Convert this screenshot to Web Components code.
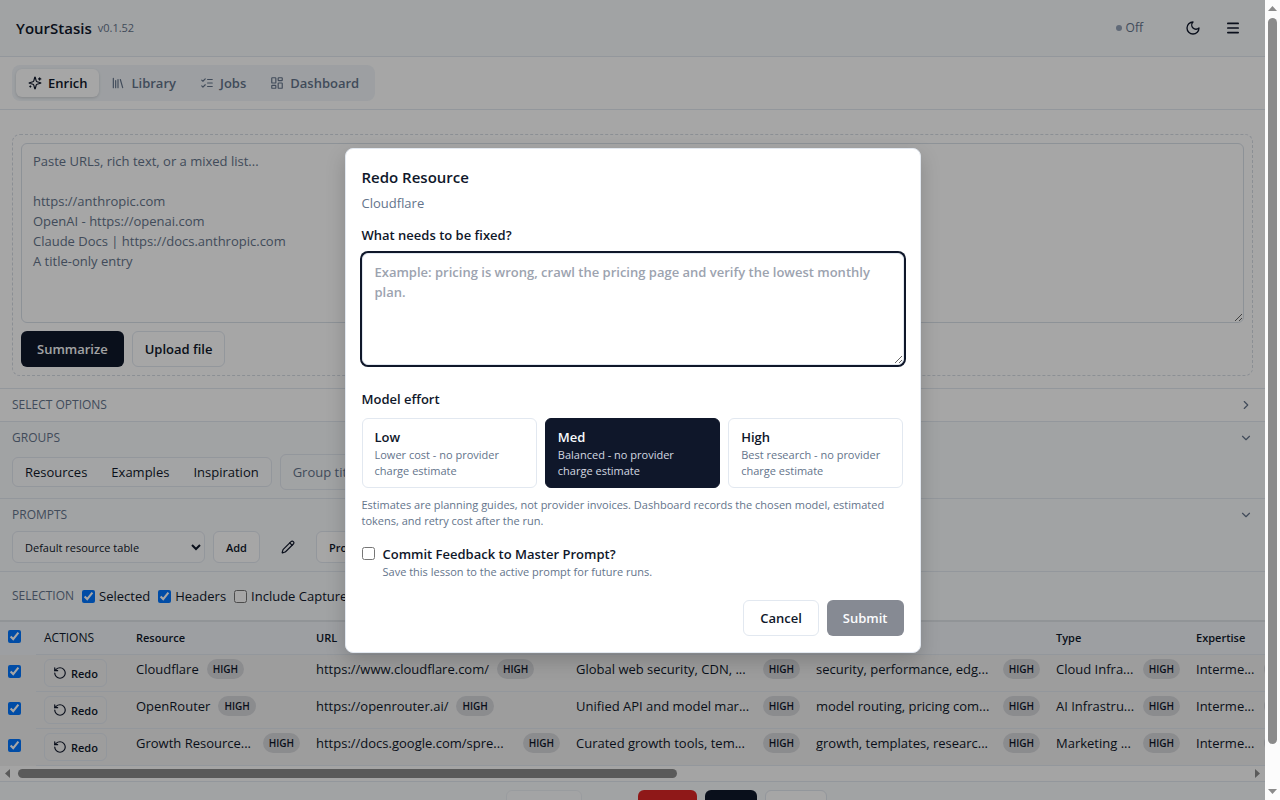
<!DOCTYPE html>
<html lang="en">
<head>
<meta charset="utf-8">
<title>YourStasis</title>
<style>
    :root {
        --ink: #0f172a;
        --muted: #64748b;
        --line: #e2e8f0;
        --surface: #f8fafc;
        --fill: #f1f5f9;
        --text-xs: 11px;
        --text-caps: 12px;
        --text-sm: 13px;
        --text-md: 15px;
    }
    body {
        margin: 0;
        background: #fff;
        color: var(--ink);
        font: 400 13px/20px "Open Sans", "Noto Sans", sans-serif;
    }
</style>
</head>
<body>
<app-shell>
    <top-bar version="v0.1.52">YourStasis</top-bar>
    <tab-bar>
        <tab-item icon="sparkles" active>Enrich</tab-item>
        <tab-item icon="library">Library</tab-item>
        <tab-item icon="checks">Jobs</tab-item>
        <tab-item icon="dashboard">Dashboard</tab-item>
    </tab-bar>
    <paste-box></paste-box>
    <option-section heading="Select options" plain></option-section>
    <option-section heading="Groups" open><group-options></group-options></option-section>
    <option-section heading="Prompts" open><prompt-options></prompt-options></option-section>
    <selection-bar></selection-bar>
    <resource-table></resource-table>
    <page-footer></page-footer>
    <redo-dialog slot="overlay" resource="Cloudflare"></redo-dialog>
</app-shell>

<script>
/**
 * Registers a custom element with an open shadow root.
 * @param {string} tag - Element name.
 * @param {string} css - Styles for the shadow root.
 * @param {string|function} markup - HTML, or a function of the host that returns it.
 */
function component(tag, css, markup) {
    customElements.define(tag, class extends HTMLElement {
        connectedCallback() {
            if (this.shadowRoot) return;
            const root = this.attachShadow({ mode: 'open' });
            const html = typeof markup === 'function' ? markup(this) : markup;
            root.innerHTML = `<style>*, ::before, ::after { box-sizing: border-box; } ${css}</style>${html}`;
        }
    });
}

const ICONS = {
    sparkles: '<path d="M9.937 15.5A2 2 0 0 0 8.5 14.063l-6.135-1.582a.5.5 0 0 1 0-.962L8.5 9.936A2 2 0 0 0 9.937 8.5l1.582-6.135a.5.5 0 0 1 .963 0L14.063 8.5A2 2 0 0 0 15.5 9.937l6.135 1.581a.5.5 0 0 1 0 .964L15.5 14.063a2 2 0 0 0-1.437 1.437l-1.582 6.135a.5.5 0 0 1-.963 0z"/><path d="M20 3v4M22 5h-4M4 17v2M5 18H3"/>',
    library: '<path d="m16 6 4 14M12 6v14M8 8v12M4 4v16"/>',
    checks: '<path d="m3 17 2 2 4-4M3 7l2 2 4-4M13 6h8M13 12h8M13 18h8"/>',
    dashboard: '<rect x="3" y="3" width="7" height="9" rx="1"/><rect x="14" y="3" width="7" height="5" rx="1"/><rect x="14" y="12" width="7" height="9" rx="1"/><rect x="3" y="16" width="7" height="5" rx="1"/>',
    moon: '<path d="M12 3a6 6 0 0 0 9 9 9 9 0 1 1-9-9Z"/>',
    menu: '<path stroke-width="2.6" d="M4.3 5.2h15.4M4.3 12h15.4M4.3 18.8h15.4"/>',
    pencil: '<path d="M21.174 6.812a1 1 0 0 0-3.986-3.987L3.842 16.174a2 2 0 0 0-.5.83l-1.321 4.352a.5.5 0 0 0 .623.622l4.353-1.32a2 2 0 0 0 .83-.497z"/><path d="m15 5 4 4"/>',
    redo: '<path d="M3 12a9 9 0 1 0 9-9 9.75 9.75 0 0 0-6.74 2.74L3 8"/><path d="M3 3v5h5"/>',
    right: '<path d="m9 18 6-6-6-6"/>',
    down: '<path d="m6 9 6 6 6-6"/>'
};

component('ui-icon', `
    :host { display: inline-flex; width: 14px; height: 14px; flex: none; }
    :host([size="16"]) { width: 16px; height: 16px; }
    svg { width: 100%; height: 100%; fill: none; stroke: currentColor; stroke-width: 2; stroke-linecap: round; stroke-linejoin: round; }
`, host => `<svg viewBox="0 0 24 24" aria-hidden="true">${ICONS[host.getAttribute('name')]}</svg>`);

component('ui-button', `
    :host { display: inline-flex; }
    button {
        display: flex; align-items: center; justify-content: center; gap: 4px;
        width: 100%; height: 36px; padding: 0 12px;
        border: 1px solid var(--line); border-radius: 6px;
        background: #fff; color: var(--ink);
        font-family: inherit; font-size: var(--text-sm); font-weight: 600;
        white-space: nowrap;
    }
    :host([wide]) button { padding: 0 16px; }
    :host([size="sm"]) button { height: 32px; font-size: var(--text-xs); }
    :host([size="xs"]) button { height: 28px; padding: 0 8px; font-size: var(--text-xs); background: transparent; }
    :host([variant="primary"]) button { border: 0; background: var(--ink); color: #f8fafc; }
    :host([variant="danger"]) button { border: 0; background: #dc2626; color: #fff; }
    :host([variant="ghost"]) button { width: 40px; padding: 0; background: none; border-color: transparent; }
    :host([variant="icon"]) button { width: 32px; height: 32px; padding: 0; background: none; border-color: transparent; }
    button:disabled { opacity: .5; }
`, host => `<button type="button"${host.hasAttribute('disabled') ? ' disabled' : ''}${host.hasAttribute('label') ? ` aria-label="${host.getAttribute('label')}"` : ''}><slot></slot></button>`);

component('ui-check', `
    :host { display: inline-flex; }
    label { display: flex; align-items: center; gap: 4px; white-space: nowrap; }
    input { width: 13px; height: 13px; margin: 0; }
`, host => `<label><input type="checkbox" aria-label="${host.getAttribute('label') || host.textContent}"${host.hasAttribute('checked') ? ' checked' : ''}><slot></slot></label>`);

component('top-bar', `
    :host { display: flex; align-items: center; height: 57px; padding: 0 16px; box-sizing: border-box; background: var(--surface); border-bottom: 1px solid var(--line); }
    h1 { margin: 0; font-size: var(--text-md); font-weight: 600; line-height: 24px; }
    .version { margin-left: 6px; color: var(--muted); font-size: var(--text-xs); font-weight: 500; }
    .right { margin-left: auto; display: flex; align-items: center; gap: 8px; }
    .status { display: flex; align-items: center; gap: 4px; padding-right: 26px; color: var(--muted); font-size: 12px; font-weight: 500; }
    .status::before { content: ""; width: 6px; height: 6px; border-radius: 50%; background: #94a3b8; }
`, host => `
    <h1><slot></slot></h1><span class="version">${host.getAttribute('version')}</span>
    <div class="right">
        <span class="status">Off</span>
        <ui-button variant="icon" label="Toggle theme"><ui-icon name="moon" size="16"></ui-icon></ui-button>
        <ui-button variant="icon" label="Menu"><ui-icon name="menu" size="16"></ui-icon></ui-button>
    </div>`);

component('tab-bar', `
    :host { display: flex; padding: 8px 12px; border-bottom: 1px solid var(--line); }
    nav { display: flex; padding: 4px; border-radius: 8px; background: var(--fill); }
`, '<nav aria-label="Main"><slot></slot></nav>');

component('tab-item', `
    :host { display: flex; }
    button { display: flex; align-items: center; gap: 6px; height: 28px; padding: 0 12px; border: 0; border-radius: 6px; background: none; color: var(--muted); font-family: inherit; font-size: var(--text-sm); font-weight: 600; }
    :host([active]) button { background: #fff; color: var(--ink); box-shadow: 0 1px 3px rgba(0, 0, 0, .15); }
`, host => `<button type="button"><ui-icon name="${host.getAttribute('icon')}"></ui-icon><slot></slot></button>`);

component('paste-box', `
    :host { display: block; padding: 24px 12px 12px; }
    .drop { display: grid; gap: 8px; padding: 8px; border: 1px dashed #d6dce4; border-radius: 8px; }
    textarea { display: block; width: 100%; height: 180px; padding: 7px 11px; border: 1px solid #d9e0e9; border-radius: 6px; background: none; font: inherit; font-size: var(--text-sm); line-height: 20px; resize: vertical; }
    textarea::placeholder { color: var(--muted); }
    .actions { display: flex; gap: 8px; }
`, `
    <div class="drop">
        <textarea aria-label="Resources" placeholder="Paste URLs, rich text, or a mixed list...&#10;&#10;https://anthropic.com&#10;OpenAI - https://openai.com&#10;Claude Docs | https://docs.anthropic.com&#10;A title-only entry"></textarea>
        <div class="actions">
            <ui-button variant="primary" wide>Summarize</ui-button>
            <ui-button>Upload file</ui-button>
        </div>
    </div>`);

component('option-section', `
    :host { display: block; padding: 8px 12px; border-top: 1px solid var(--line); background: var(--surface); }
    :host([plain]) { background: #fff; }
    header { display: flex; align-items: center; justify-content: space-between; height: 16px; color: var(--muted); }
    h2 { margin: 0; font-size: var(--text-caps); font-weight: 500; line-height: 16px; text-transform: uppercase; }
    slot { display: block; }
    :host([open]) slot { padding-top: 8px; }
`, host => `
    <header><h2>${host.getAttribute('heading')}</h2><ui-icon name="${host.hasAttribute('open') ? 'down' : 'right'}"></ui-icon></header>
    <slot></slot>`);

component('group-options', `
    :host { display: flex; align-items: center; gap: 8px; }
    .segments { display: flex; border: 1px solid var(--line); border-radius: 6px; background: #fbfcfd; }
    .segments button { height: 28px; padding: 0 12px; border: 0; background: none; color: var(--ink); font: inherit; font-size: var(--text-sm); }
    input { width: 224px; height: 36px; padding: 0 12px; border: 1px solid var(--line); border-radius: 6px; background: none; font: inherit; font-size: var(--text-sm); }
    input::placeholder { color: var(--muted); }
`, `
    <div class="segments"><button type="button">Resources</button><button type="button">Examples</button><button type="button">Inspiration</button></div>
    <input type="text" aria-label="Group title" placeholder="Group title">`);

component('prompt-options', `
    :host { display: flex; gap: 8px; }
    select { width: 193px; height: 32px; padding: 0 8px; border: 1px solid var(--line); border-radius: 6px; background: #fbfcfd; color: var(--ink); font: inherit; font-size: var(--text-xs); }
`, `
    <select aria-label="Prompt"><option>Default resource table</option></select>
    <ui-button size="sm">Add</ui-button>
    <ui-button size="sm" variant="ghost" label="Edit prompt"><ui-icon name="pencil"></ui-icon></ui-button>
    <ui-button size="sm">Prompt</ui-button>`);

component('selection-bar', `
    :host { display: flex; align-items: center; gap: 8px; height: 49px; padding: 0 12px; box-sizing: border-box; border-top: 1px solid var(--line); background: var(--surface); }
    h2 { margin: 0; color: var(--muted); font-size: var(--text-caps); font-weight: 500; text-transform: uppercase; }
`, `
    <h2>Selection</h2>
    <ui-check checked>Selected</ui-check>
    <ui-check checked>Headers</ui-check>
    <ui-check>Include Captured</ui-check>`);

const ROWS = [
    ['Cloudflare', 'https://www.cloudflare.com/', 'Global web security, CDN, ...', 'security, performance, edg...', 'Cloud Infra...', 'Interme...'],
    ['OpenRouter', 'https://openrouter.ai/', 'Unified API and model mar...', 'model routing, pricing com...', 'AI Infrastru...', 'Interme...'],
    ['Growth Resource...', 'https://docs.google.com/spre...', 'Curated growth tools, tem...', 'growth, templates, researc...', 'Marketing ...', 'Interme...']
];

// Shortened values take the whole cell, so that their badge sits at its right edge.
// The last column has a bare badge, which runs under the edge of the view.
const cell = (text, i, row) => `<td><div class="value"><span${text.endsWith('...') ? ' class="cut"' : ''}>${text}</span><b>${i === row.length - 1 ? '' : 'HIGH'}</b></div></td>`;

component('resource-table', `
    :host { display: block; border-top: 2px solid #dfe3e9; }
    .view { overflow: hidden; }
    table { width: 2365px; table-layout: fixed; border-collapse: separate; border-spacing: 0; }
    .pick { width: 36px; } .actions { width: 92px; } .resource { width: 180px; } .url { width: 260px; }
    .text { width: 240px; } .type { width: 140px; } .level { width: 120px; }
    th { height: 33px; padding: 0 8px; border-bottom: 1px solid var(--line); background: var(--fill); font-size: var(--text-xs); font-weight: 600; text-align: left; }
    td { height: 37px; padding: 4px 8px; border-bottom: 1px solid var(--line); background: #f2f2f2; vertical-align: top; }
    th:first-child, td:first-child { border-bottom-color: transparent; vertical-align: middle; }
    th:first-child { padding-bottom: 4px; }
    td:first-child { padding-bottom: 8px; }
    th ui-check, td ui-check { display: flex; }
    .caps { font-size: var(--text-caps); font-weight: 500; text-transform: uppercase; }
    .value { display: flex; gap: 8px; line-height: 20px; white-space: nowrap; }
    .cut { flex: 1; min-width: 0; }
    b { flex: none; min-width: 36px; height: 20px; padding: 0 6px; border-radius: 10px; background: #d6d7db; font-size: 10px; font-weight: 600; text-align: center; }
`, `
    <div class="view"><table>
        <colgroup><col class="pick"><col class="actions"><col class="resource"><col class="url"><col class="text"><col class="text"><col class="type"><col class="level"><col></colgroup>
        <thead><tr><th><ui-check checked label="Select all"></ui-check></th><th class="caps">Actions</th><th>Resource</th><th>URL</th><th></th><th></th><th>Type</th><th>Expertise</th><th></th></tr></thead>
        <tbody>${ROWS.map(row => `
            <tr><td><ui-check checked label="Select ${row[0]}"></ui-check></td><td><ui-button size="xs"><ui-icon name="redo"></ui-icon>Redo</ui-button></td>${row.map(cell).join('')}<td></td></tr>`).join('')}
        </tbody>
    </table></div>
    <scroll-bar direction="row"></scroll-bar>`);

component('scroll-bar', `
    :host { display: flex; flex-direction: column; align-items: center; justify-content: space-between; width: 15px; padding: 6px 0; box-sizing: border-box; background: #fcfcfc; }
    :host([direction="row"]) { flex-direction: row; width: auto; height: 15px; padding: 0 5px; }
    .track { flex: 1; align-self: stretch; padding: 7px 3px; }
    .thumb { width: 9px; height: 95%; border-radius: 5px; background: #8b8b8b; }
    :host([direction="row"]) .track { padding: 3px 8px; }
    :host([direction="row"]) .thumb { width: 53.6%; height: 9px; }
    svg { flex: none; width: 9px; height: 5px; fill: #8b8b8b; }
    :host([direction="row"]) svg { width: 5px; height: 9px; }
`, host => host.getAttribute('direction') === 'row'
    ? '<svg viewBox="0 0 5 9"><path d="M5 0v9L0 4.5z"/></svg><div class="track"><div class="thumb"></div></div><svg viewBox="0 0 5 9"><path d="M0 0v9l5-4.5z"/></svg>'
    : '<svg viewBox="0 0 9 5"><path d="M0 5h9L4.5 0z"/></svg><div class="track"><div class="thumb"></div></div><svg viewBox="0 0 9 5"><path d="M0 0h9L4.5 5z"/></svg>');

component('page-footer', `
    :host { display: grid; grid-template-columns: 59px 76px 40px 59px 52px 62px; gap: 8px; justify-content: center; padding: 8px 12px; border-top: 1px solid var(--line); background: var(--surface); }
    .previous { grid-column: 2; }
    .delete { grid-column: 4; }
`, `
    <ui-button size="sm" class="previous" disabled label="Previous page"></ui-button>
    <ui-button size="sm" class="delete" variant="danger" label="Delete"></ui-button>
    <ui-button size="sm" variant="primary" label="Save"></ui-button>
    <ui-button size="sm" label="Export"></ui-button>`);

component('effort-card', `
    :host { display: flex; }
    button { flex: 1; padding: 8px 12px; border: 1px solid var(--line); border-radius: 6px; background: #fff; color: var(--ink); font-family: inherit; text-align: left; }
    strong, span { display: block; }
    strong { font-size: var(--text-sm); font-weight: 600; line-height: 20px; }
    span { color: var(--muted); font-size: var(--text-xs); line-height: 16px; }
    :host([selected]) button { background: var(--ink); border-color: var(--ink); color: #f8fafc; }
    :host([selected]) span { color: #d3d8e0; }
`, host => `<button type="button" aria-pressed="${host.hasAttribute('selected')}"><strong>${host.getAttribute('name')}</strong><span><slot></slot></span></button>`);

component('redo-dialog', `
    :host { display: flex; align-items: center; justify-content: center; background: rgba(0, 0, 0, .35); }
    section { width: 100%; max-width: 576px; padding: 16px; border: 1px solid var(--line); border-radius: 8px; background: #fff; box-shadow: 0 8px 20px rgba(0, 0, 0, .18); }
    h2, h3, p { margin: 0; }
    h2 { font-size: var(--text-md); font-weight: 600; line-height: 24px; }
    .name { margin-top: 4px; color: var(--muted); }
    .field { display: block; margin-top: 12px; font-weight: 600; }
    textarea { display: block; width: 100%; height: 112px; margin-top: 8px; padding: 8px 12px; border: 1px solid var(--line); border-radius: 6px; outline: none; box-shadow: 0 0 0 2px var(--ink); color: var(--ink); font: inherit; line-height: 20px; resize: vertical; }
    textarea::placeholder { color: #9ca3af; }
    h3 { margin-top: 24px; font-size: var(--text-sm); font-weight: 600; line-height: 20px; }
    .cards { display: grid; grid-template-columns: repeat(3, 1fr); gap: 8px; margin-top: 9px; }
    .hint { color: var(--muted); font-size: var(--text-xs); line-height: 16px; }
    .cards + .hint { margin-top: 9px; }
    .commit { display: grid; grid-template-columns: 13px 1fr; column-gap: 8px; align-items: center; margin-top: 15px; }
    .commit input { width: 13px; height: 13px; margin: 0; }
    .commit label { font-weight: 600; }
    .commit .hint { grid-column: 2; }
    footer { display: flex; justify-content: flex-end; gap: 8px; margin-top: 20px; }
`, host => `
    <section role="dialog" aria-modal="true" aria-labelledby="title">
        <h2 id="title">Redo Resource</h2>
        <p class="name">${host.getAttribute('resource')}</p>
        <label class="field" for="fix">What needs to be fixed?
            <textarea id="fix" placeholder="Example: pricing is wrong, crawl the pricing page and verify the lowest monthly plan."></textarea>
        </label>
        <h3>Model effort</h3>
        <div class="cards">
            <effort-card name="Low">Lower cost - no provider charge estimate</effort-card>
            <effort-card name="Med" selected>Balanced - no provider charge estimate</effort-card>
            <effort-card name="High">Best research - no provider charge estimate</effort-card>
        </div>
        <p class="hint">Estimates are planning guides, not provider invoices. Dashboard records the chosen model, estimated tokens, and retry cost after the run.</p>
        <div class="commit">
            <input id="commit" type="checkbox">
            <label for="commit">Commit Feedback to Master Prompt?</label>
            <p class="hint">Save this lesson to the active prompt for future runs.</p>
        </div>
        <footer>
            <ui-button wide>Cancel</ui-button>
            <ui-button variant="primary" wide disabled>Submit</ui-button>
        </footer>
    </section>`);

component('app-shell', `
    :host { display: flex; height: 100vh; }
    .page { position: relative; flex: 1; min-width: 0; overflow: hidden; }
    ::slotted([slot="overlay"]) { position: absolute; inset: 0; }
`, '<div class="page"><slot></slot><slot name="overlay"></slot></div><scroll-bar></scroll-bar>');

// The feedback box is ready for typing as soon as the dialog shows.
document.querySelector('redo-dialog').shadowRoot.querySelector('textarea').focus();
</script>
</body>
</html>
